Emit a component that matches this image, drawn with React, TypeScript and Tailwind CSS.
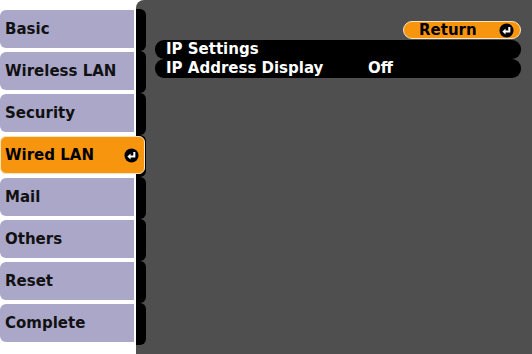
import React from "react";

const tabs = ["Basic", "Wireless LAN", "Security", "Wired LAN", "Mail", "Others", "Reset", "Complete"];

function ReturnIcon() {
  return (
    <svg width="15" height="15" viewBox="0 0 16 16">
      <circle cx="8" cy="8" r="7.5" fill="#000" />
      <path d="M11 4.2 V9 H6" stroke="#fff" strokeWidth="2.2" fill="none" strokeLinejoin="miter" />
      <path d="M7 5.8 L3.6 9 L7 12.2 Z" fill="#fff" />
    </svg>
  );
}

export default function App() {
  return (
    <div
      className="w-[532px] h-[354px] bg-white flex overflow-hidden"
      style={{ fontFamily: '"DejaVu Sans", Verdana, sans-serif' }}
    >
      <div className="w-[136px] shrink-0 flex flex-col pt-[10px] gap-[4px] relative z-10">
        {tabs.map((t) =>
          t === "Wired LAN" ? (
            <div
              key={t}
              className="w-[145px] h-[38px] bg-[#f7950f] rounded-[6px] border border-[#f6e3c0] flex items-center justify-between pl-[4px] pr-[5px] text-[15px] font-bold text-black"
            >
              <span>{t}</span>
              <ReturnIcon />
            </div>
          ) : (
            <div
              key={t}
              className="w-[134px] h-[38px] bg-[#aaa7c9] rounded-l-[6px] flex items-center pl-[5px] text-[15px] font-bold text-[#111]"
            >
              {t}
            </div>
          )
        )}
      </div>
      <div className="flex-1 bg-[#4f4f4f] rounded-tl-[8px] flex">
        <div className="w-[10px] shrink-0 flex flex-col pt-[9px]">
          {tabs.map((t) => (
            <div key={t} className="h-[42px] bg-black rounded-r-[6px]" />
          ))}
        </div>
        <div className="flex-1 flex flex-col items-end pt-[21px] pr-[11px] pl-[9px]">
          <div className="w-[118px] h-[18px] bg-[#f7950f] rounded-full border border-[#f6e3c0] flex items-center justify-between pl-[15px] pr-[6px] text-[15px] font-bold text-black leading-none">
            <span>Return</span>
            <ReturnIcon />
          </div>
          <div className="w-full mt-[1px] flex flex-col">
            <div className="h-[19px] bg-black rounded-[9px] flex items-center pl-[11px] text-[15px] font-bold text-white">
              IP Settings
            </div>
            <div className="h-[19px] bg-black rounded-[9px] flex items-center pl-[11px] text-[15px] font-bold text-white">
              <span className="w-[202px]">IP Address Display</span>
              <span>Off</span>
            </div>
          </div>
        </div>
      </div>
    </div>
  );
}
